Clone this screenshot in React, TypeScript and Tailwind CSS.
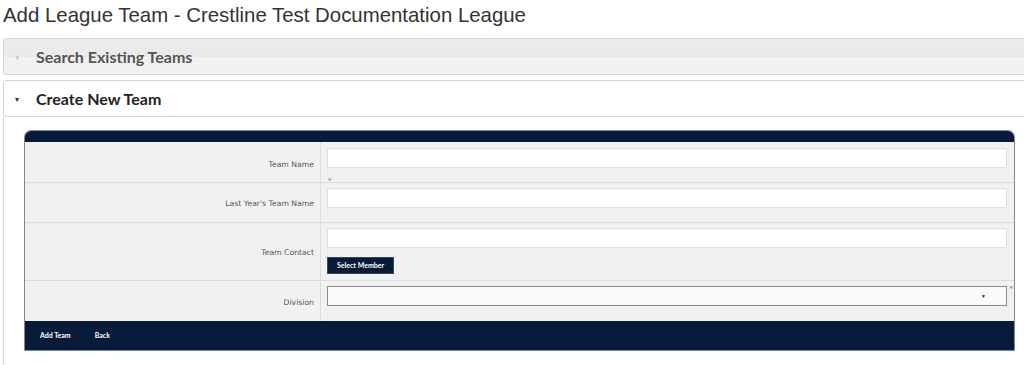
const dark = 'bg-[#081a3a]';

const AccordionHeader = ({
  title,
  open,
}: {
  title: string;
  open?: boolean;
}) => {
  return (
    <div
      className={
        open
          ? 'mr-[-12px] flex h-[37px] items-center rounded-l-[3px] border border-[#d4d4d4] bg-white'
          : 'mr-[-12px] flex h-[37px] items-center rounded-l-[3px] border border-[#d4d4d4] bg-[linear-gradient(#ececec_0%,#eaeaea_50%,#f1f1f1_52%,#f1f1f1_100%)]'
      }
    >
      <span
        className={
          open
            ? 'w-[32px] pl-[11px] text-[8px] leading-none text-[#333]'
            : 'w-[32px] pl-[12px] text-[8px] leading-none text-[#888]'
        }
      >
        {open ? '▾' : '›'}
      </span>
      <span
        className={
          open
            ? "font-['Lato',sans-serif] text-[16px] font-bold text-[#222]"
            : "font-['Lato',sans-serif] text-[16px] font-bold text-[#555]"
        }
      >
        {title}
      </span>
    </div>
  );
};

const FieldLabel = ({ children }: { children: string }) => (
  <div className="flex items-center justify-end border-r border-[#dcdcdc] pr-[6px] pt-[3px] font-['DejaVu_Sans',sans-serif] text-[7.7px] text-[#555]">
    {children}
  </div>
);

const TextBox = () => (
  <div className="h-[20px] w-full rounded-[1px] border border-[#dedede] bg-white" />
);

const App = () => {
  return (
    <div className="h-[365px] w-[1024px] overflow-hidden bg-white">
      <h1 className="pl-[3px] pt-[3px] font-['Liberation_Sans',Arial,sans-serif] text-[20.4px] leading-[24px] text-[#333]">
        Add League Team - Crestline Test Documentation League
      </h1>

      <div className="ml-[3px] mt-[11px] flex flex-col gap-[5px]">
        <AccordionHeader title="Search Existing Teams" />
        <AccordionHeader title="Create New Team" open />
      </div>

      <div className="ml-[3px] border-l border-[#d8d8d8] pb-[20px] pl-[20px] pr-[9px] pt-[13px]">
        <div className="overflow-hidden rounded-t-[7px] border border-[#7f8899] bg-[#f1f1f1]">
          <div className={`h-[11px] ${dark}`} />

          {/* Team Name */}
          <div className="grid h-[41px] grid-cols-[296px_1fr] border-b border-[#dcdcdc]">
            <FieldLabel>Team Name</FieldLabel>
            <div className="flex flex-col pl-[6px] pr-[7px] pt-[6px]">
              <TextBox />
              <span className="ml-[1px] mt-[10px] font-['DejaVu_Sans',sans-serif] text-[7px] leading-none text-[#e0444c]">
                *
              </span>
            </div>
          </div>

          {/* Last Year's Team Name */}
          <div className="grid h-[40px] grid-cols-[296px_1fr] border-b border-[#dcdcdc]">
            <FieldLabel>Last Year's Team Name</FieldLabel>
            <div className="pl-[6px] pr-[7px] pt-[5px]">
              <TextBox />
            </div>
          </div>

          {/* Team Contact */}
          <div className="grid h-[58px] grid-cols-[296px_1fr] border-b border-[#dcdcdc]">
            <FieldLabel>Team Contact</FieldLabel>
            <div className="flex flex-col items-start pl-[6px] pr-[7px] pt-[5px]">
              <TextBox />
              <button
                className={`mt-[9px] flex h-[17px] w-[67px] items-center justify-center border border-[#39465e] ${dark} font-['Lato',sans-serif] text-[7px] font-bold text-white`}
              >
                Select Member
              </button>
            </div>
          </div>

          {/* Division */}
          <div className="grid h-[40px] grid-cols-[296px_1fr]">
            <FieldLabel>Division</FieldLabel>
            <div className="pl-[6px] pr-[7px] pt-[5px]">
              <div className="relative flex h-[20px] w-full items-center justify-end border border-[#8a8a8a] bg-[#fafafa] pr-[20px]">
                <span className="text-[5px] leading-none text-[#222]">▼</span>
                <span className="absolute right-[-7px] top-[-1px] font-['DejaVu_Sans',sans-serif] text-[7px] leading-none text-[#e0444c]">
                  *
                </span>
              </div>
            </div>
          </div>

          <div
            className={`flex h-[29px] items-center gap-[24px] pl-[15px] ${dark} font-['Lato',sans-serif] text-[7px] font-bold text-white`}
          >
            <span>Add Team</span>
            <span>Back</span>
          </div>
        </div>
      </div>
    </div>
  );
};

export default App;
